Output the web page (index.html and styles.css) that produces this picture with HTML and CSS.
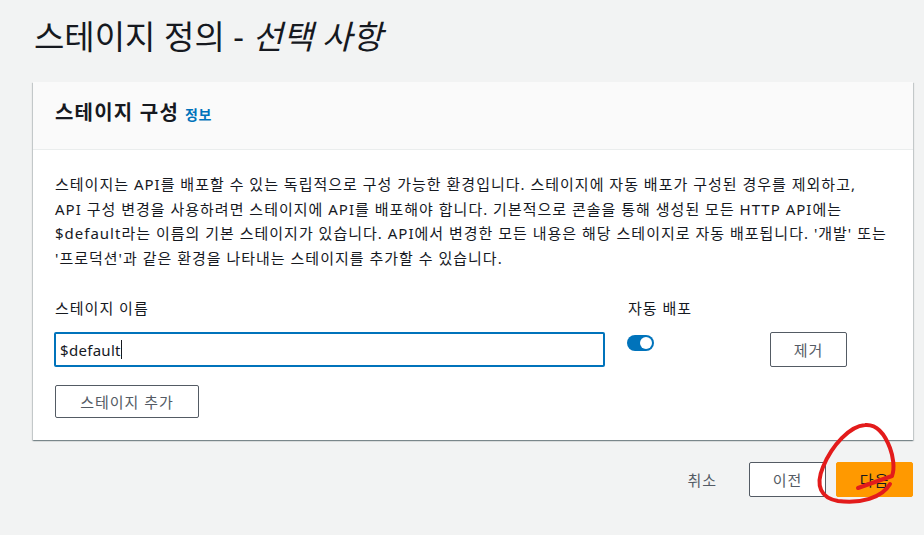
FILE: index.html
```html
<!DOCTYPE html>
<html lang="ko">
<head>
  <meta charset="UTF-8">
  <meta name="viewport" content="width=device-width, initial-scale=1.0">
  <title>스테이지 정의</title>
  <link rel="stylesheet" href="styles.css">
</head>
<body>
  <div class="page">
    <h1 class="title">스테이지 정의 - <em>선택 사항</em></h1>

    <div class="card">
      <div class="card-head">
        <h2>스테이지 구성</h2>
        <a href="#" class="info">정보</a>
      </div>
      <div class="card-body">
        <p class="desc">스테이지는 API를 배포할 수 있는 독립적으로 구성 가능한 환경입니다. 스테이지에 자동 배포가 구성된 경우를 제외하고,<br>
          API 구성 변경을 사용하려면 스테이지에 API를 배포해야 합니다. 기본적으로 콘솔을 통해 생성된 모든 HTTP API에는<br>
          $default라는 이름의 기본 스테이지가 있습니다. API에서 변경한 모든 내용은 해당 스테이지로 자동 배포됩니다. '개발' 또는<br>
          '프로덕션'과 같은 환경을 나타내는 스테이지를 추가할 수 있습니다.</p>

        <div class="stage-row">
          <label class="label">스테이지 이름</label>
          <label class="label">자동 배포</label>
          <span></span>
          <div class="input">$default<span class="caret"></span></div>
          <div><span class="toggle"></span></div>
          <button class="btn">제거</button>
        </div>

        <button class="btn btn-add">스테이지 추가</button>
      </div>
    </div>

    <div class="actions">
      <button class="btn-link">취소</button>
      <button class="btn">이전</button>
      <button class="btn btn-primary">다음</button>
    </div>
  </div>

  <!-- 빨간 펜 표시 -->
  <svg class="mark" width="924" height="535" viewBox="0 0 924 535">
    <path d="M858 488 L892 476 C895 468 893 456 890 448 C884 432 876 424 865 425 C850 426 832 445 823 467 C815 486 821 498 838 501 C860 504 882 498 890 484" fill="none" stroke="#e31b1b" stroke-width="4" stroke-linecap="round" stroke-linejoin="round"/>
  </svg>
</body>
</html>
```

FILE: styles.css
```css
*{
  margin: 0;
  padding: 0;
  box-sizing: border-box;
}
html,body{
  height: 100%;
}
body{
  position: relative;
  background-color: #f2f3f3;
  color: #16191f;
  font-family: "Noto Sans", "Noto Sans CJK KR", sans-serif;
  font-size: 15px;
  letter-spacing: 1px;
  word-break: keep-all;
}
.page{
  padding: 18px 11px 0 33px;
}
.title{
  font-size: 33px;
  font-weight: 400;
  line-height: 38px;
  letter-spacing: 0;
  margin: 0 0 26px 1px;
}
.title em{
  font-style: italic;
}
.card{
  background-color: #fff;
  box-shadow: 0 1px 1px 0 rgba(0, 28, 36, .3), 1px 1px 1px 0 rgba(0, 28, 36, .15), -1px 1px 1px 0 rgba(0, 28, 36, .15);
}
.card-head{
  display: flex;
  align-items: baseline;
  gap: 6px;
  padding: 19px 22px 24px;
  background-color: #fafafa;
  border-bottom: 1px solid #eaeded;
}
.card-head h2{
  font-size: 20px;
  font-weight: 700;
  line-height: 24px;
  letter-spacing: 1.2px;
}
.info{
  font-size: 14px;
  font-weight: 700;
  letter-spacing: .6px;
  color: #0073bb;
  text-decoration: none;
}
.card-body{
  padding: 22px 21px 22px;
}
.desc{
  line-height: 24.5px;
  padding-left: 1px;
  white-space: nowrap;
}
.stage-row{
  display: grid;
  grid-template-columns: 551px 121px 77px;
  column-gap: 22px;
  row-gap: 13px;
  margin-top: 27px;
}
.label{
  line-height: 22px;
  padding-left: 1px;
}
.input{
  height: 35px;
  padding: 0 4px;
  display: flex;
  align-items: center;
  border: 2px solid #0073bb;
  border-radius: 2px;
  letter-spacing: .3px;
}
.caret{
  display: inline-block;
  width: 1px;
  height: 19px;
  background-color: #16191f;
}
.toggle{
  position: relative;
  display: block;
  width: 27px;
  height: 16px;
  margin-top: 3px;
  border-radius: 8px;
  background-color: #0073bb;
}
.toggle::after{
  content: '';
  position: absolute;
  top: 2px;
  right: 2px;
  width: 12px;
  height: 12px;
  border-radius: 50%;
  background-color: #fff;
}
.btn{
  height: 35px;
  padding: 0 10px;
  font-family: inherit;
  font-size: 15px;
  letter-spacing: 1px;
  color: #545b64;
  background-color: #fff;
  border: 1px solid #545b64;
  border-radius: 2px;
}
.btn-add{
  width: 144px;
  height: 33px;
  margin-top: 18px;
  margin-left: 1px;
}
.actions{
  display: flex;
  justify-content: flex-end;
  gap: 10px;
  margin-top: 22px;
}
.actions .btn{
  width: 77px;
}
.btn-link{
  padding: 0 22px;
  font-family: inherit;
  font-size: 15px;
  letter-spacing: 1px;
  color: #545b64;
  background: none;
  border: none;
}
.btn-primary{
  color: #16191f;
  background-color: #ff9900;
  border-color: #ff9900;
}
.mark{
  position: absolute;
  top: 0;
  left: 0;
  z-index: 5;
  pointer-events: none;
}
```
